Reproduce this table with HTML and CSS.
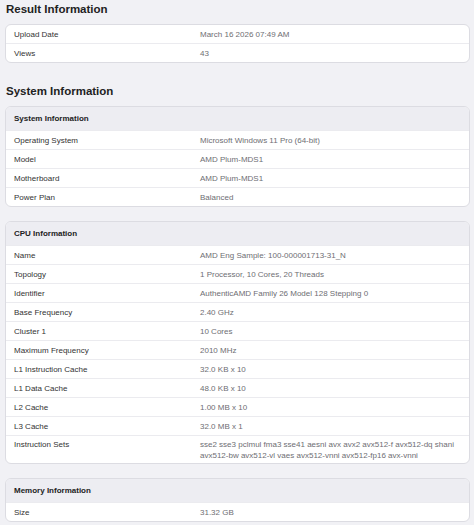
FILE: index.html
```html
<!DOCTYPE html>
<html lang="en">
<head>
  <meta charset="UTF-8">
  <meta name="viewport" content="width=device-width, initial-scale=1.0">
  <title>Benchmark Result</title>
  <link rel="stylesheet" href="styles.css">
</head>
<body>
  <!-- Resultado -->
  <h2 class="section-title first">Result Information</h2>
  <div class="card">
    <div class="row"><div class="label">Upload Date</div><div class="value">March 16 2026 07:49 AM</div></div>
    <div class="row"><div class="label">Views</div><div class="value">43</div></div>
  </div>

  <!-- Sistema -->
  <h2 class="section-title">System Information</h2>
  <div class="card">
    <div class="card-header">System Information</div>
    <div class="row"><div class="label">Operating System</div><div class="value">Microsoft Windows 11 Pro (64-bit)</div></div>
    <div class="row"><div class="label">Model</div><div class="value">AMD Plum-MDS1</div></div>
    <div class="row"><div class="label">Motherboard</div><div class="value">AMD Plum-MDS1</div></div>
    <div class="row"><div class="label">Power Plan</div><div class="value">Balanced</div></div>
  </div>

  <div class="card">
    <div class="card-header">CPU Information</div>
    <div class="row"><div class="label">Name</div><div class="value">AMD Eng Sample: 100-000001713-31_N</div></div>
    <div class="row"><div class="label">Topology</div><div class="value">1 Processor, 10 Cores, 20 Threads</div></div>
    <div class="row"><div class="label">Identifier</div><div class="value">AuthenticAMD Family 26 Model 128 Stepping 0</div></div>
    <div class="row"><div class="label">Base Frequency</div><div class="value">2.40 GHz</div></div>
    <div class="row"><div class="label">Cluster 1</div><div class="value">10 Cores</div></div>
    <div class="row"><div class="label">Maximum Frequency</div><div class="value">2010 MHz</div></div>
    <div class="row"><div class="label">L1 Instruction Cache</div><div class="value">32.0 KB x 10</div></div>
    <div class="row"><div class="label">L1 Data Cache</div><div class="value">48.0 KB x 10</div></div>
    <div class="row"><div class="label">L2 Cache</div><div class="value">1.00 MB x 10</div></div>
    <div class="row"><div class="label">L3 Cache</div><div class="value">32.0 MB x 1</div></div>
    <div class="row multi"><div class="label">Instruction Sets</div><div class="value">sse2 sse3 pclmul fma3 sse41 aesni avx avx2 avx512-f avx512-dq shani<br>avx512-bw avx512-vl vaes avx512-vnni avx512-fp16 avx-vnni</div></div>
  </div>

  <div class="card">
    <div class="card-header">Memory Information</div>
    <div class="row"><div class="label">Size</div><div class="value">31.32 GB</div></div>
  </div>
</body>
</html>
```

FILE: styles.css
```css
/* Fondo de la página */
body {
  margin: 0;
  padding: 0 4px 0 5px;
  background: #f1f1f5;
  font-family: "Liberation Sans", Arial, sans-serif;
  color: #333;
}

/* Títulos de sección */
.section-title {
  margin: 21px 0 7px 1px;
  font-size: 11.5px;
  line-height: 15px;
  font-weight: bold;
  color: #222;
}
.section-title.first {
  margin-top: 2px;
}

/* Tarjetas */
.card {
  background: #ffffff;
  border: 1px solid #dcdce2;
  border-radius: 6px;
  overflow: hidden;
  margin-bottom: 14px;
}
.card-header {
  padding: 6px 8px;
  font-size: 8px;
  line-height: 11px;
  font-weight: bold;
  color: #222;
  background: #ededf2;
}

/* Filas */
.row {
  display: grid;
  grid-template-columns: 186px 1fr;
  padding: 3.5px 8px;
  font-size: 8px;
  line-height: 11px;
  border-top: 1px solid #ebebef;
}
.row.multi {
  padding: 3px 8px 2px;
}
.card > .row:first-child {
  border-top: none;
}
.label {
  color: #333;
}
.value {
  color: #6e6e73;
}
```
